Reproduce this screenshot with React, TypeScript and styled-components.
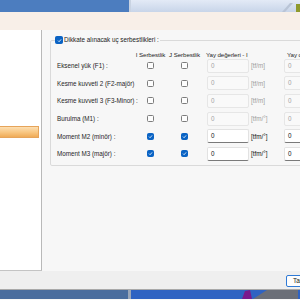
import React from "react";
import styled, { createGlobalStyle } from "styled-components";

const GlobalStyle = createGlobalStyle`
  html, body {
    margin: 0;
    padding: 0;
    width: 300px;
    height: 300px;
    overflow: hidden;
    background: #f7f7f7;
  }
  * {
    box-sizing: border-box;
  }
`;

const Screen = styled.div`
  width: 300px;
  height: 300px;
  display: flex;
  flex-direction: column;
  font-family: "Liberation Sans", Arial, sans-serif;
  font-size: 6.3px;
  color: #222;
  overflow: hidden;
`;

const TopBar = styled.div`
  height: 12px;
  display: flex;
`;

const TopDark = styled.div`
  width: 131px;
  background: #4c7dbf;
  border-right: 2px solid #c9d3e2;
`;

const TopLight = styled.div`
  flex: 1;
  background: linear-gradient(#e3eaf6, #c8d5e9);
  display: flex;
  justify-content: flex-end;
  align-items: flex-end;
`;

const Beige = styled.div`
  height: 18px;
  background: #f8efe8;
`;

const Main = styled.div`
  height: 241px;
  display: flex;
`;

const SidePanel = styled.div`
  width: 42px;
  background: #fff;
  border-right: 1px solid #b9b9b9;
  border-bottom: 1px solid #c4c4c4;
  padding-top: 96px;
  padding-right: 2px;
`;

const SideItem = styled.div`
  height: 12px;
  background: linear-gradient(#fddfb2, #f8c57f 55%, #efab57);
  border: 1px solid #e6a45a;
  border-left: none;
`;

const Content = styled.div`
  flex: 1;
  background: #f7f7f7;
  padding: 6px 0 0 8px;
  overflow: hidden;
`;

const Group = styled.fieldset`
  width: 300px;
  margin: 0;
  padding: 0 0 2px 6px;
  border: 1px solid #dadada;
  border-radius: 2px;
`;

const Legend = styled.legend`
  display: flex;
  align-items: center;
  gap: 1px;
  margin-left: -2px;
  padding: 0 1px 0 0;
  height: 8px;
  line-height: 8px;
`;

const Box = styled.span<{ $checked?: boolean; $size?: number }>`
  width: ${(p) => p.$size ?? 7}px;
  height: ${(p) => p.$size ?? 7}px;
  border-radius: 1.5px;
  border: 1px solid ${(p) => (p.$checked ? "#0a63c4" : "#7d7d7d")};
  background: ${(p) => (p.$checked ? "#0a63c4" : "#fdfdfd")};
  display: inline-flex;
  align-items: center;
  justify-content: center;
`;

const Grid = styled.div`
  display: grid;
  grid-template-columns: 78px 31px 37px 46px 35px 46px;
  grid-template-rows: 12px repeat(6, 17.6px);
  padding-top: 1px;
  align-items: center;
`;

const Head = styled.div<{ $center?: boolean; $span?: number }>`
  align-self: end;
  margin-bottom: -1px;
  line-height: 6px;
  font-size: 6.2px;
  letter-spacing: -0.1px;
  white-space: nowrap;
  color: #1e1e1e;
  text-align: ${(p) => (p.$center ? "center" : "left")};
  grid-column: span ${(p) => p.$span ?? 1};
  padding-left: ${(p) => (p.$center ? 0 : 3)}px;
`;

const Label = styled.div`
  white-space: nowrap;
  color: #262626;
`;

const Cell = styled.div`
  display: flex;
  justify-content: center;
`;

const InputCell = styled.div`
  display: flex;
  justify-content: flex-end;
`;

const Field = styled.div<{ $enabled?: boolean }>`
  width: 42px;
  height: 14px;
  line-height: 12px;
  padding-left: 3px;
  border: 1px solid ${(p) => (p.$enabled ? "#e2e2e2" : "#e6e6e6")};
  border-bottom-color: ${(p) => (p.$enabled ? "#7a7a7a" : "#e6e6e6")};
  border-radius: 2px;
  background: ${(p) => (p.$enabled ? "#fff" : "#f9f9f9")};
  color: ${(p) => (p.$enabled ? "#111" : "#a3a3a3")};
`;

const Unit = styled.div<{ $enabled?: boolean }>`
  padding-left: 2px;
  white-space: nowrap;
  color: ${(p) => (p.$enabled ? "#111" : "#9d9d9d")};
`;

const Footer = styled.div`
  height: 19px;
  background: #efefef;
  border-bottom: 1px solid #a9a9a9;
  display: flex;
  justify-content: flex-end;
  align-items: center;
  padding-top: 1px;
`;

const Button = styled.div`
  width: 40px;
  height: 12px;
  margin-right: -26px;
  background: #fdfdfd;
  border: 1px solid #2f7ad6;
  border-radius: 2px;
  padding-left: 6px;
  line-height: 10px;
  font-size: 6.5px;
  color: #222;
`;

const Taskbar = styled.div`
  height: 9px;
  display: flex;
`;

const TaskLeft = styled.div`
  width: 131px;
  background: #4a6d9e;
  border-right: 3px solid #9aa6b8;
`;

const TaskRight = styled.div`
  flex: 1;
  background: #2f63c2;
  display: flex;
  padding-left: 111px;
`;

const Check = () => (
  <svg width="5" height="5" viewBox="0 0 10 10">
    <path d="M2 5.2 L4.2 7.4 L8.2 2.8" fill="none" stroke="#fff" strokeWidth="1.6" />
  </svg>
);

type Row = {
  label: string;
  unit: string;
  on: boolean;
};

const rows: Row[] = [
  { label: "Eksenel yük (F1) :", unit: "[tf/m]", on: false },
  { label: "Kesme kuvveti 2 (F2-majör)", unit: "[tf/m]", on: false },
  { label: "Kesme kuvveti 3 (F3-Minor) :", unit: "[tf/m]", on: false },
  { label: "Burulma (M1) :", unit: "[tfm/°]", on: false },
  { label: "Moment M2 (minör) :", unit: "[tfm/°]", on: true },
  { label: "Moment M3 (majör) :", unit: "[tfm/°]", on: true },
];

const App: React.FC = () => {
  return (
    <>
      <GlobalStyle />
      <Screen>
        <TopBar>
          <TopDark />
          <TopLight>
            <svg width="18" height="12" viewBox="0 0 18 12">
              <path d="M0 12 L8 3 L11 3 L3 12 Z" fill="#b9c4d6" />
              <rect x="14" y="4" width="4" height="8" fill="#8f9a2e" />
            </svg>
          </TopLight>
        </TopBar>
        <Beige />
        <Main>
          <SidePanel>
            <SideItem />
          </SidePanel>
          <Content>
            <Group>
              <Legend>
                <Box $checked $size={8}>
                  <Check />
                </Box>
                Dikkate alınacak uç serbestlikleri :
              </Legend>
              <Grid>
                <div />
                <Head $center>I Serbestlik</Head>
                <Head $center>J Serbestlik</Head>
                <Head $span={2}>Yay değerleri - I</Head>
                <Head>Yay değerleri - J</Head>
                {rows.map((r) => (
                  <React.Fragment key={r.label}>
                    <Label>{r.label}</Label>
                    <Cell>
                      <Box $checked={r.on}>{r.on && <Check />}</Box>
                    </Cell>
                    <Cell>
                      <Box $checked={r.on}>{r.on && <Check />}</Box>
                    </Cell>
                    <InputCell>
                      <Field $enabled={r.on}>0</Field>
                    </InputCell>
                    <Unit $enabled={r.on}>{r.unit}</Unit>
                    <div>
                      <Field $enabled={r.on}>0</Field>
                    </div>
                  </React.Fragment>
                ))}
              </Grid>
            </Group>
          </Content>
        </Main>
        <Footer>
          <Button>Tamam</Button>
        </Footer>
        <Taskbar>
          <TaskLeft />
          <TaskRight>
            <svg width="56" height="9" viewBox="0 0 56 9">
              <path d="M0 9 L3 1 L8 0 L10 9 Z" fill="#7a1a8c" />
              <path d="M11 9 L25 0 L56 0 L56 9 Z" fill="#6b6f78" />
            </svg>
          </TaskRight>
        </Taskbar>
      </Screen>
    </>
  );
};

export default App;
